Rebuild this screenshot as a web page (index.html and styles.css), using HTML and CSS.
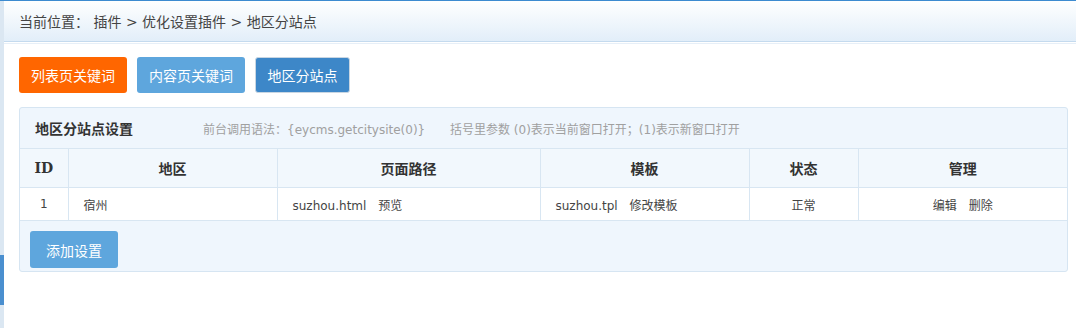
FILE: index.html
```html
<!DOCTYPE html>
<html lang="zh-CN">
<head>
<meta charset="utf-8">
<title>地区分站点</title>
<link rel="stylesheet" href="styles.css">
</head>
<body>
<div class="page">
  <aside class="strip">
    <div class="strip-top"></div>
    <div class="strip-mark"></div>
    <div class="strip-rest"></div>
  </aside>
  <main class="main">
    <div class="crumbs">当前位置<span class="fw">：</span> 插件 &gt; 优化设置插件 &gt; 地区分站点</div>
    <div class="content">
      <div class="tabs">
        <a class="btn btn-orange">列表页关键词</a>
        <a class="btn btn-light">内容页关键词</a>
        <a class="btn btn-active">地区分站点</a>
      </div>
      <section class="panel">
        <div class="panel-head">
          <span class="panel-title">地区分站点设置</span>
          <span class="hint hint-a">前台调用语法<span class="fw">：</span>{eycms.getcitysite(0)}</span>
          <span class="hint hint-b">括号里参数 (0)表示当前窗口打开<span class="fw">；</span>(1)表示新窗口打开</span>
        </div>
        <table class="grid">
          <colgroup>
            <col class="c-id"><col class="c-area"><col class="c-path"><col class="c-tpl"><col class="c-state"><col class="c-op">
          </colgroup>
          <thead>
            <tr>
              <th class="th-id">ID</th>
              <th>地区</th>
              <th>页面路径</th>
              <th>模板</th>
              <th>状态</th>
              <th>管理</th>
            </tr>
          </thead>
          <tbody>
            <tr>
              <td class="center">1</td>
              <td>宿州</td>
              <td>suzhou.html <a class="link">预览</a></td>
              <td>suzhou.tpl <a class="link">修改模板</a></td>
              <td class="center">正常</td>
              <td class="center"><a class="op">编辑</a> <a class="op op-gap">删除</a></td>
            </tr>
          </tbody>
        </table>
        <div class="panel-foot">
          <a class="btn btn-add">添加设置</a>
        </div>
      </section>
    </div>
  </main>
</div>
</body>
</html>
```

FILE: styles.css
```css
html, body {
  margin: 0;
  padding: 0;
  background: #ffffff;
}

body {
  font-family: "DejaVu Sans", "Noto Sans CJK SC", sans-serif;
  color: #333333;
  width: 1076px;
  height: 328px;
  overflow: hidden;
}

.page {
  display: flex;
  height: 327px;
  border-top: 1px solid #3d8bd0;
}

.strip {
  width: 4px;
  display: flex;
  flex-direction: column;
}

.strip-top {
  height: 254px;
  background: #dbe7f2;
}

.strip-mark {
  height: 50px;
  background: #4a8fcf;
}

.strip-rest {
  flex: 1;
  background: #dbe7f2;
}

.main {
  flex: 1;
  display: flex;
  flex-direction: column;
}

.crumbs {
  height: 40px;
  line-height: 40px;
  padding-left: 15px;
  font-size: 14px;
  color: #444444;
  background: linear-gradient(to bottom, #ffffff 0%, #f6fafd 30%, #e2eef9 100%);
  border-bottom: 1px solid #c4daee;
  box-shadow: 0 1px 0 #ffffff, 0 2px 0 #e6eff8;
  font-family: "DejaVu Sans", "Noto Sans CJK SC", sans-serif;
}

.fw {
  font-family: "Noto Sans CJK SC", sans-serif;
}

.content {
  padding: 15px 8px 0 15px;
}

.tabs {
  display: flex;
  gap: 10px;
  height: 36px;
}

.btn {
  display: inline-flex;
  align-items: center;
  justify-content: center;
  height: 36px;
  box-sizing: border-box;
  padding: 0;
  border-radius: 3px;
  font-size: 14px;
  color: #ffffff;
  white-space: nowrap;
  font-family: "Noto Sans CJK SC", sans-serif;
  cursor: pointer;
}

.btn-orange {
  background: #ff6600;
  width: 108px;
}

.btn-light {
  background: #5ea6dd;
  width: 108px;
}

.btn-active {
  background: #3d87c8;
  border: 1px solid #c9d6e2;
  width: 95px;
}

.panel {
  margin-top: 14px;
  border: 1px solid #d6e5f2;
  border-radius: 3px;
  background: #eff6fd;
  overflow: hidden;
}

.panel-head {
  height: 40px;
  display: flex;
  align-items: center;
  padding-left: 15px;
}

.panel-title {
  font-size: 14px;
  font-weight: bold;
  color: #333333;
  font-family: "Noto Sans CJK SC", sans-serif;
  width: 168px;
}

.hint {
  font-size: 12px;
  color: #a0a0a0;
}

.hint-a {
  width: 247px;
}

.grid {
  width: 100%;
  border-collapse: collapse;
  table-layout: fixed;
  font-size: 12px;
}

.c-id { width: 48px; }
.c-area { width: 209px; }
.c-path { width: 263px; }
.c-tpl { width: 209px; }
.c-state { width: 109px; }

.grid th,
.grid td {
  border: 1px solid #d8e6f2;
  padding: 0 15px;
  text-align: left;
  white-space: nowrap;
}

.grid th:first-child,
.grid td:first-child {
  border-left: none;
}

.grid th:last-child,
.grid td:last-child {
  border-right: none;
}

.grid th {
  height: 38px;
  background: #f2f8fd;
  font-size: 14px;
  font-weight: bold;
  text-align: center;
  color: #333333;
  font-family: "Noto Sans CJK SC", sans-serif;
}

.grid th.th-id {
  font-family: "DejaVu Serif", serif;
  padding: 0;
}

.grid td {
  height: 32px;
  background: #ffffff;
  color: #444444;
}

.grid td.center {
  text-align: center;
  padding: 0;
}

.link {
  margin-left: 8px;
  color: #444444;
}

.op {
  color: #444444;
}

.op-gap {
  margin-left: 8px;
}

.panel-foot {
  height: 50px;
  padding: 10px 0 0 10px;
  box-sizing: border-box;
}

.btn-add {
  background: #5ea6dd;
  width: 88px;
  height: 37px;
}
```
